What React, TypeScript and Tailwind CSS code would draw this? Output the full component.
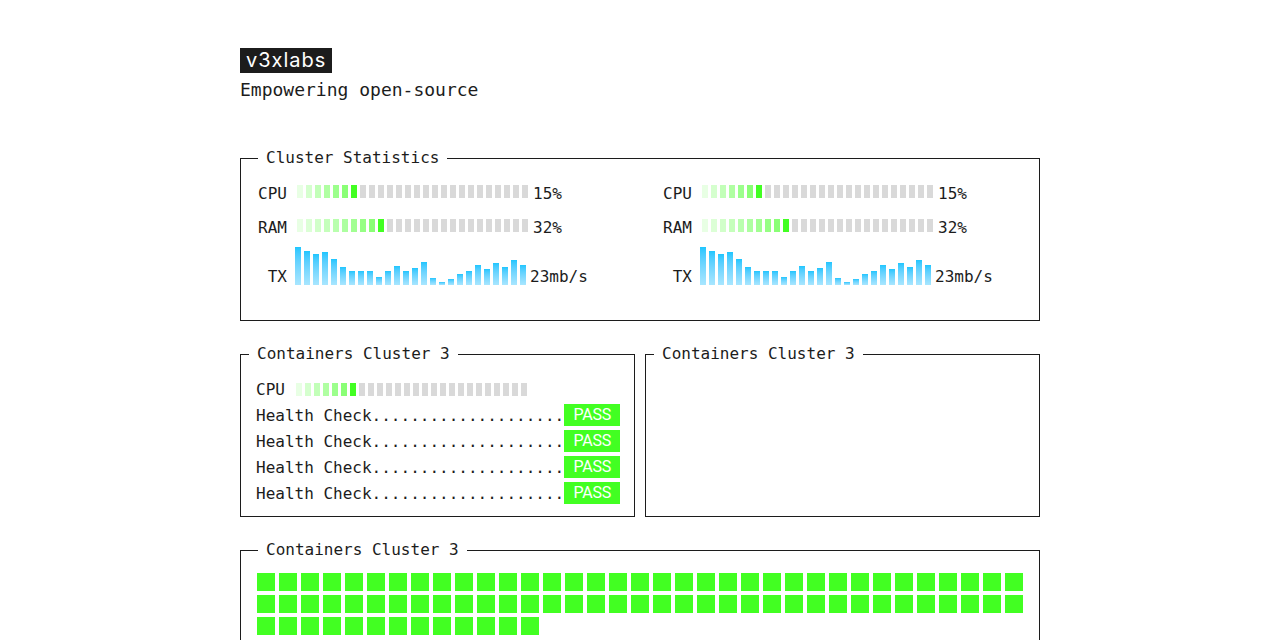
import React from "react";

const MONO = { fontFamily: '"DejaVu Sans Mono", "Liberation Mono", monospace' };

const TX = [38, 34, 31, 33, 26, 18, 14, 14, 14, 8, 14, 19, 14, 17, 23, 7, 3, 6, 11, 14, 20, 16, 22, 18, 25, 20];

function Segments({ filled, total = 26 }: { filled: number; total?: number }) {
  return (
    <div className="flex gap-[3px]">
      {Array.from({ length: total }).map((_, i) => {
        if (i < filled) {
          const op = i === filled - 1 ? 1 : 0.12 + 0.5 * (i / Math.max(1, filled - 2));
          return <div key={i} className="w-[6px] h-[13px] bg-[#42ff22]" style={{ opacity: op }} />;
        }
        return <div key={i} className="w-[6px] h-[13px] bg-[#d9d9d9]" />;
      })}
    </div>
  );
}

function TxBars() {
  return (
    <div className="flex items-end gap-[3px] h-[38px] -ml-[2px]">
      {TX.map((h, i) => (
        <div key={i} className="w-[6px] bg-linear-to-b from-[#1cc6ff] to-[#a8e6ff]" style={{ height: h }} />
      ))}
    </div>
  );
}

function StatColumn() {
  return (
    <div className="flex flex-col">
      <div className="flex items-center h-[34px] gap-[10px]">
        <span className="w-[29px] text-right pt-[5px] leading-[18px]">CPU</span>
        <Segments filled={7} />
        <span className="-ml-[5px] pt-[5px] leading-[18px]">15%</span>
      </div>
      <div className="flex items-center h-[34px] gap-[10px]">
        <span className="w-[29px] text-right pt-[5px] leading-[18px]">RAM</span>
        <Segments filled={10} />
        <span className="-ml-[5px] pt-[5px] leading-[18px]">32%</span>
      </div>
      <div className="flex items-end h-[38px] mt-[5px] gap-[10px]">
        <span className="w-[29px] text-right leading-[17px]">TX</span>
        <TxBars />
        <span className="leading-[17px] -ml-[6px]">23mb/s</span>
      </div>
    </div>
  );
}

function HealthRow() {
  return (
    <div className="flex items-center h-[26px]">
      <span className="whitespace-pre pt-[2px] leading-[20px]">Health Check....................</span>
      <span
        className="w-[56px] h-[22px] flex items-center justify-center bg-[#42ff22] text-white text-[16px] tracking-[-0.3px]"
        style={{ fontFamily: 'Roboto, "Liberation Sans", sans-serif' }}
      >
        PASS
      </span>
    </div>
  );
}

export default function App() {
  return (
    <div className="min-h-[640px] bg-white text-[#1c1c1c]" style={MONO}>
      <div className="w-[800px] mx-auto pt-[48px] pb-10">
        <div className="flex">
          <div
            className="bg-[#1c1c1c] text-white h-[25px] leading-[25px] px-[6px] text-[20px] tracking-[1px]"
            style={{ fontFamily: 'Inter, "Liberation Sans", sans-serif' }}
          >
            v3xlabs
          </div>
        </div>
        <div className="mt-[3px] text-[18px] leading-[28px]">Empowering open-source</div>

        <fieldset className="mt-[42px] border border-[#1c1c1c] text-[16px]">
          <legend className="ml-[17px] px-2 leading-6">Cluster Statistics</legend>
          <div className="grid grid-cols-[405px_1fr] pl-[17px] pt-[4px] pb-[35px] leading-6">
            <StatColumn />
            <StatColumn />
          </div>
        </fieldset>

        <div className="mt-[21px] grid grid-cols-2 gap-[10px] text-[16px]">
          <fieldset className="border border-[#1c1c1c]">
            <legend className="ml-[8px] px-2 leading-6">Containers Cluster 3</legend>
            <div className="pl-[15px] pt-[10px] pb-[10px] leading-6">
              <div className="flex items-center h-[26px] gap-[11px]">
                <span className="w-[29px] pt-[2px] leading-[20px]">CPU</span>
                <Segments filled={7} />
              </div>
              <HealthRow />
              <HealthRow />
              <HealthRow />
              <HealthRow />
            </div>
          </fieldset>
          <fieldset className="border border-[#1c1c1c]">
            <legend className="ml-[8px] px-2 leading-6">Containers Cluster 3</legend>
          </fieldset>
        </div>

        <fieldset className="mt-[21px] border border-[#1c1c1c] text-[16px]">
          <legend className="ml-[17px] px-2 leading-6">Containers Cluster 3</legend>
          <div className="px-[16px] pt-[11px] pb-[16px] flex flex-wrap gap-[4px]">
            {Array.from({ length: 83 }).map((_, i) => (
              <div key={i} className="w-[18px] h-[18px] bg-[#42ff22]" />
            ))}
          </div>
        </fieldset>
      </div>
    </div>
  );
}
